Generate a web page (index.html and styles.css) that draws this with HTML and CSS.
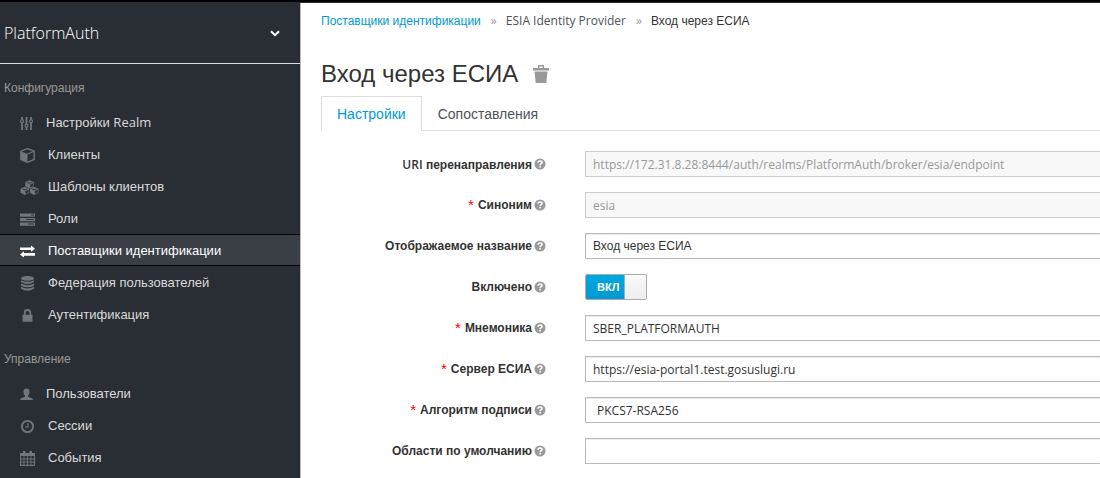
FILE: index.html
```html
<!DOCTYPE html>
<html lang="ru">
<head>
    <meta charset="UTF-8">
    <meta name="viewport" content="width=device-width, initial-scale=1.0">
    <title>PlatformAuth</title>
    <link rel="stylesheet" href="styles.css">
</head>
<body>

    <svg class="sprite" aria-hidden="true">
        <symbol id="help" viewBox="0 0 12 12">
            <circle cx="6" cy="6" r="5.500" fill="#999"/>
            <path d="M4 4.800C4 3.500 4.800 3 6 3s2.100.6 2.100 1.600C8.100 5.700 6.100 5.600 6.100 7.200" fill="none" stroke="#fff" stroke-width="1.500"/>
            <rect x="5.300" y="8" width="1.600" height="1.500" fill="#fff"/>
        </symbol>
        <symbol id="cube" viewBox="0 0 14 14">
            <path d="M7 .6 13.200 3v7.700L7 13.400.8 10.700V3z" fill="none" stroke="currentColor" stroke-width="1.300"/>
            <path d="M.8 3 7 5.500v8L.8 10.700z" fill="currentColor"/>
            <path d="M7 5.500 13.200 3" stroke="currentColor"/>
        </symbol>
        <symbol id="block" viewBox="0 0 10 9">
            <path d="M5 .2 9.500 2v4.600L5 8.900.5 6.600V2z" fill="currentColor"/>
            <path d="M1.800 2.300 5 3.700l3.200-1.400M6 5v2.500l2.600-1.300V3.800z" fill="#292e34" stroke="#292e34" stroke-width=".5"/>
            <path d="M2.800 2 5 1.200l2.200.8L5 2.900z" fill="currentColor"/>
        </symbol>
    </svg>

    <div class="topbar"></div>

    <div class="layout">
        <nav class="sidebar">
            <button type="button" class="realm">
                <span>PlatformAuth</span>
                <svg width="10" height="7" viewBox="0 0 10 7"><path d="M1 1.200 5 5.200 9 1.200" fill="none" stroke="#fff" stroke-width="2"/></svg>
            </button>

            <section class="menu">
                <h2>Конфигурация</h2>
                <ul>
                    <li><a href="#">
                        <svg class="icon narrow" viewBox="0 0 14 14">
                            <path d="M2.200 0v14M7 0v14M11.800 0v14" stroke="currentColor" stroke-width="2"/>
                            <g fill="#292e34" stroke="currentColor" stroke-width="1.300"><circle cx="2.200" cy="4.500" r="1.600"/><circle cx="7" cy="9.500" r="1.600"/><circle cx="11.800" cy="4.500" r="1.600"/></g>
                        </svg>
                        <span>Настройки <span class="latin">Realm</span></span></a></li>
                    <li><a href="#">
                        <svg class="icon" viewBox="0 0 14 14"><use href="#cube"/></svg>
                        Клиенты</a></li>
                    <li><a href="#">
                        <svg class="icon wide" viewBox="0 0 19 15">
                            <use href="#block" x="4.500" y="0" width="10" height="8.500"/>
                            <use href="#block" x="0" y="6.500" width="9.600" height="8.500"/>
                            <use href="#block" x="9.400" y="6.500" width="9.600" height="8.500"/>
                        </svg>
                        Шаблоны клиентов</a></li>
                    <li><a href="#">
                        <svg class="icon" viewBox="0 0 15 13">
                            <path d="M0 .5h15v3.200H0zM0 5h15v3.200H0zM0 9.500h15v3.200H0z" fill="currentColor"/>
                            <path d="M11 2h3M6 6.500h8M8 11h6" stroke="#292e34" stroke-width=".9"/>
                        </svg>
                        Роли</a></li>
                    <li class="active"><a href="#">
                        <svg class="icon" viewBox="0 0 15 12">
                            <path d="M0 2h11V0l4 3.200-4 3.100V4.500H0zM15 7.500H4V5.700L0 9l4 3v-1.800h11z" fill="currentColor"/>
                        </svg>
                        Поставщики идентификации</a></li>
                    <li><a href="#">
                        <svg class="icon" viewBox="0 0 15 15">
                            <ellipse cx="7.500" cy="2.400" rx="6.500" ry="2.400" fill="currentColor"/>
                            <path d="M1 4.200q6.500 3 13 0v1.900q-6.500 3.800-13 0zM1 7.500q6.500 3.300 13 0v1.900q-6.500 3.800-13 0zM1 10.800q6.500 3.300 13 0v1.900q-6.500 4.300-13 0z" fill="currentColor"/>
                        </svg>
                        Федерация пользователей</a></li>
                    <li><a href="#">
                        <svg class="icon" viewBox="0 0 15 13">
                            <path d="M4.700 6V3.800a2.800 2.800 0 0 1 5.600 0V6" fill="none" stroke="currentColor" stroke-width="1.800"/>
                            <rect x="2.500" y="5.800" width="10" height="7" rx=".6" fill="currentColor"/>
                        </svg>
                        Аутентификация</a></li>
                </ul>
            </section>

            <section class="menu">
                <h2>Управление</h2>
                <ul>
                    <li><a href="#">
                        <svg class="icon narrow" viewBox="0 0 14 14">
                            <path d="M3.700 4C3.700 1.500 5 .5 7 .5s3.300 1 3.300 3.500c0 2-.7 3-1.500 3.800v1.500l4 1.700c.8.400 1.200 1 1.200 2H0c0-1 .4-1.600 1.200-2l4-1.700V7.800C4.400 7 3.700 6 3.700 4z" fill="currentColor"/>
                        </svg>
                        Пользователи</a></li>
                    <li><a href="#">
                        <svg class="icon" viewBox="0 0 15 14">
                            <circle cx="7.500" cy="7" r="5.600" fill="none" stroke="currentColor" stroke-width="1.900"/>
                            <path d="M8 3.500v4H5" fill="none" stroke="currentColor" stroke-width="1.200"/>
                        </svg>
                        Сессии</a></li>
                    <li><a href="#">
                        <svg class="icon" viewBox="0 0 15 15">
                            <path d="M.6 2.500h13.800v11.900H.6z" fill="none" stroke="currentColor" stroke-width="1.100"/>
                            <path d="M.6 2h13.800v3H.6zM3 0h2.500v3H3zM9.500 0H12v3H9.500z" fill="currentColor"/>
                            <path d="M4 5v9M7.500 5v9M11 5v9M1 8h13M1 11h13" stroke="currentColor" stroke-width=".9"/>
                        </svg>
                        События</a></li>
                </ul>
            </section>
        </nav>

        <main class="content">
            <ol class="breadcrumb">
                <li><a href="#">Поставщики идентификации</a></li>
                <li class="latin">ESIA Identity Provider</li>
                <li class="current">Вход через ЕСИА</li>
            </ol>

            <h1>
                Вход через ЕСИА
                <button type="button" class="delete" aria-label="Удалить">
                    <svg width="16" height="18" viewBox="0 0 16 18">
                        <path d="M0 3h16v2.500H0zM1.500 6.500h13L13.300 18H2.700z" fill="#999"/>
                        <path d="M5.700 3V.8h4.600V3" fill="none" stroke="#999" stroke-width="1.500"/>
                    </svg>
                </button>
            </h1>

            <ul class="tabs">
                <li class="active"><a href="#">Настройки</a></li>
                <li><a href="#">Сопоставления</a></li>
            </ul>

            <form class="form">
                <div class="row">
                    <label for="redirectUri"><span><span class="latin">URI</span> перенаправления</span><svg class="help"><use href="#help"/></svg></label>
                    <input type="text" id="redirectUri" value="https://172.31.8.28:8444/auth/realms/PlatformAuth/broker/esia/endpoint" disabled>
                </div>
                <div class="row">
                    <label for="alias"><span class="required">*</span>Синоним<svg class="help"><use href="#help"/></svg></label>
                    <input type="text" id="alias" value="esia" disabled>
                </div>
                <div class="row">
                    <label for="displayName">Отображаемое название<svg class="help"><use href="#help"/></svg></label>
                    <input type="text" id="displayName" class="cyrillic" value="Вход через ЕСИА">
                </div>
                <div class="row">
                    <label for="enabled">Включено<svg class="help"><use href="#help"/></svg></label>
                    <div class="switch">
                        <input type="checkbox" id="enabled" checked>
                        <span class="switch-on">ВКЛ</span>
                        <span class="switch-knob"></span>
                    </div>
                </div>
                <div class="row">
                    <label for="mnemonic"><span class="required">*</span>Мнемоника<svg class="help"><use href="#help"/></svg></label>
                    <input type="text" id="mnemonic" value="SBER_PLATFORMAUTH">
                </div>
                <div class="row">
                    <label for="server"><span class="required">*</span>Сервер ЕСИА<svg class="help"><use href="#help"/></svg></label>
                    <input type="text" id="server" value="https://esia-portal1.test.gosuslugi.ru">
                </div>
                <div class="row">
                    <label for="algorithm"><span class="required">*</span>Алгоритм подписи<svg class="help"><use href="#help"/></svg></label>
                    <select id="algorithm">
                        <option>PKCS7-RSA256</option>
                    </select>
                </div>
                <div class="row">
                    <label for="scopes">Области по умолчанию<svg class="help"><use href="#help"/></svg></label>
                    <input type="text" id="scopes">
                </div>
            </form>
        </main>
    </div>

</body>
</html>
```
FILE: styles.css
```css
* {
    box-sizing: border-box;
}

body {
    margin: 0;
    min-height: 100vh;
    display: flex;
    flex-direction: column;
    font-family: "Liberation Sans", Arial, sans-serif;
    font-size: 12px;
    color: #333;
    background: #fff;
}

ul, ol {
    list-style: none;
    margin: 0;
    padding: 0;
}

a {
    color: inherit;
    text-decoration: none;
}

.sprite {
    display: none;
}

.latin {
    font-family: "Open Sans", sans-serif;
}

.topbar {
    height: 3px;
    background: #000;
    border-bottom: 1px solid #292e34;
}

.layout {
    flex: 1;
    display: flex;
}

/* Sidebar */
.sidebar {
    width: 300px;
    flex-shrink: 0;
    background: #292e34;
    color: #dbdada;
}

.realm {
    display: flex;
    justify-content: space-between;
    align-items: center;
    width: 100%;
    height: 61px;
    padding: 0 20px 0 4px;
    border: none;
    border-bottom: 1px solid #dbdada;
    background: none;
    color: #fff;
    font-family: "Open Sans", sans-serif;
    font-size: 16px;
    font-weight: 300;
}

.menu {
    padding: 12px 0 5px;
}

.menu h2 {
    margin: 0 0 6px;
    padding-left: 4px;
    font-size: 12px;
    font-weight: normal;
    line-height: 24px;
    color: #999;
}

.menu a {
    display: flex;
    align-items: center;
    height: 32px;
    padding-left: 20px;
    font-size: 13px;
}

.menu .active a {
    background: #393f45;
    border-top: 1px solid #000;
    border-bottom: 1px solid #000;
    color: #fff;
}

.icon {
    width: 15px;
    height: 15px;
    margin: 2px 13px 0 0;
    color: #72767b;
}

.icon.narrow {
    width: 13px;
}

.icon.wide {
    width: 19px;
    margin-right: 9px;
}

.active .icon {
    color: #fff;
}

/* Content */
.content {
    flex: 1;
    min-width: 0;
    padding: 8px 0 0 20px;
    border-left: 1px solid #bbb;
}

.breadcrumb {
    display: flex;
    line-height: 20px;
    color: #4d5258;
}

.breadcrumb a {
    color: #0099d3;
}

.breadcrumb li + li::before {
    content: "»";
    padding: 0 9px 0 10px;
    font-family: "Open Sans", sans-serif;
    color: #999;
}

.breadcrumb .current {
    color: #333;
}

h1 {
    display: flex;
    align-items: center;
    gap: 15px;
    margin: 28px 0 7px;
    font-size: 24px;
    font-weight: normal;
    line-height: 30px;
}

.delete {
    display: flex;
    padding: 0;
    border: none;
    background: none;
}

.tabs {
    display: flex;
    border-bottom: 1px solid #e1e1e1;
    font-size: 14px;
    color: #4d5258;
}

.tabs a {
    display: block;
    height: 34px;
    padding: 0 15px;
    border: 1px solid transparent;
    border-bottom: none;
    line-height: 34px;
}

.tabs .active a {
    height: 35px;
    margin-bottom: -1px;
    border-color: #ddd;
    background: #fff;
    color: #0099d3;
}

/* Form */
.form {
    display: flex;
    flex-direction: column;
    gap: 15px;
    padding: 20px 0;
}

.row {
    display: grid;
    grid-template-columns: 225px 1fr;
    column-gap: 39px;
    align-items: center;
}

.row > label {
    display: flex;
    justify-content: flex-end;
    align-items: center;
    font-weight: bold;
}

.row > label .latin {
    font-weight: 600;
}

.required {
    margin-right: 4px;
    font-size: 15px;
    line-height: 14px;
    font-weight: normal;
    color: #f00;
}

.help {
    width: 12px;
    height: 12px;
    margin-left: 2px;
}

.row > input, .row > select {
    width: 100%;
    height: 26px;
    padding: 0 7px;
    border: 1px solid #bababa;
    border-right: none;
    border-radius: 1px 0 0 1px;
    background: #fff;
    box-shadow: inset 0 1px 1px rgba(0, 0, 0, 0.08);
    color: #333;
    font-family: "Open Sans", sans-serif;
    font-size: 12px;
}

.row > input.cyrillic {
    font-family: "Liberation Sans", Arial, sans-serif;
}

.row > input:disabled {
    border-color: #ccc;
    background: #f8f8f8;
    box-shadow: none;
    color: #999;
}

.row > select {
    appearance: none;
    padding-left: 11px;
}

.switch {
    position: relative;
    display: flex;
    width: 62px;
    height: 26px;
    border: 1px solid #aaa;
    border-radius: 2px;
    overflow: hidden;
}

.switch input {
    position: absolute;
    inset: 0;
    width: 100%;
    height: 100%;
    margin: 0;
    opacity: 0;
}

.switch-on {
    flex: 1;
    padding-left: 11px;
    background: linear-gradient(#00a8e1, #0099d3);
    color: #fff;
    font-size: 11px;
    font-weight: bold;
    line-height: 24px;
}

.switch-knob {
    width: 22px;
    border-left: 1px solid #aaa;
    background: linear-gradient(#fafafa, #ededed);
}
```
